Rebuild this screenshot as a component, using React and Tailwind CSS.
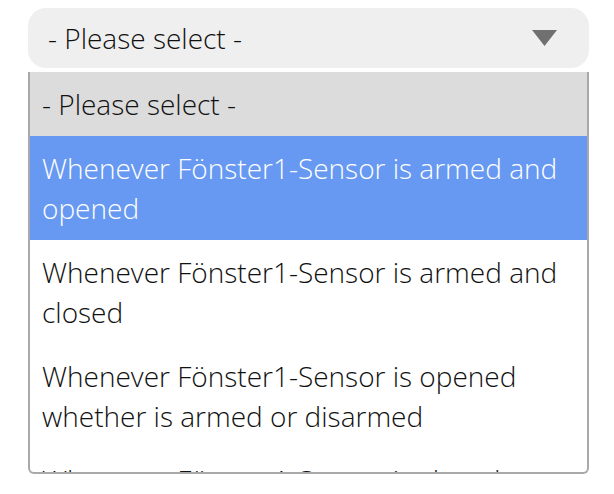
const options = [
  'Whenever Fönster1-Sensor is armed and opened',
  'Whenever Fönster1-Sensor is armed and closed',
  'Whenever Fönster1-Sensor is opened whether is armed or disarmed',
  'Whenever Fönster1-Sensor is closed whether is armed or disarmed',
];

export default function App() {
  return (
    <div className="w-[614px] h-[494px] bg-white pt-2 px-[25px] font-['Open_Sans',sans-serif] font-light text-[28px] text-[#111]">
      {/* closed select */}
      <div className="h-[60px] w-[561px] ml-[3px] rounded-[18px] bg-[#efefef] flex items-center justify-between pl-5 pr-8">
        <span className="leading-none">- Please select -</span>
        <svg width="25" height="16" viewBox="0 0 25 16">
          <polygon points="0,0 25,0 12.5,16" fill="#707070" />
        </svg>
      </div>

      {/* open listbox */}
      <div className="mt-1 ml-[3px] w-[561px] h-[402px] border-2 border-t-0 border-[#a9a9a9] rounded-b-[6px] overflow-hidden">
        <div className="bg-[#dcdcdc] px-3 py-3 leading-[40px]">- Please select -</div>
        {options.map((opt, i) => (
          <div
            key={opt}
            className={i === 0 ? 'bg-[#6799f2] text-white px-3 py-3 leading-[40px]' : 'px-3 py-3 leading-[40px]'}
          >
            {opt}
          </div>
        ))}
      </div>
    </div>
  );
}
